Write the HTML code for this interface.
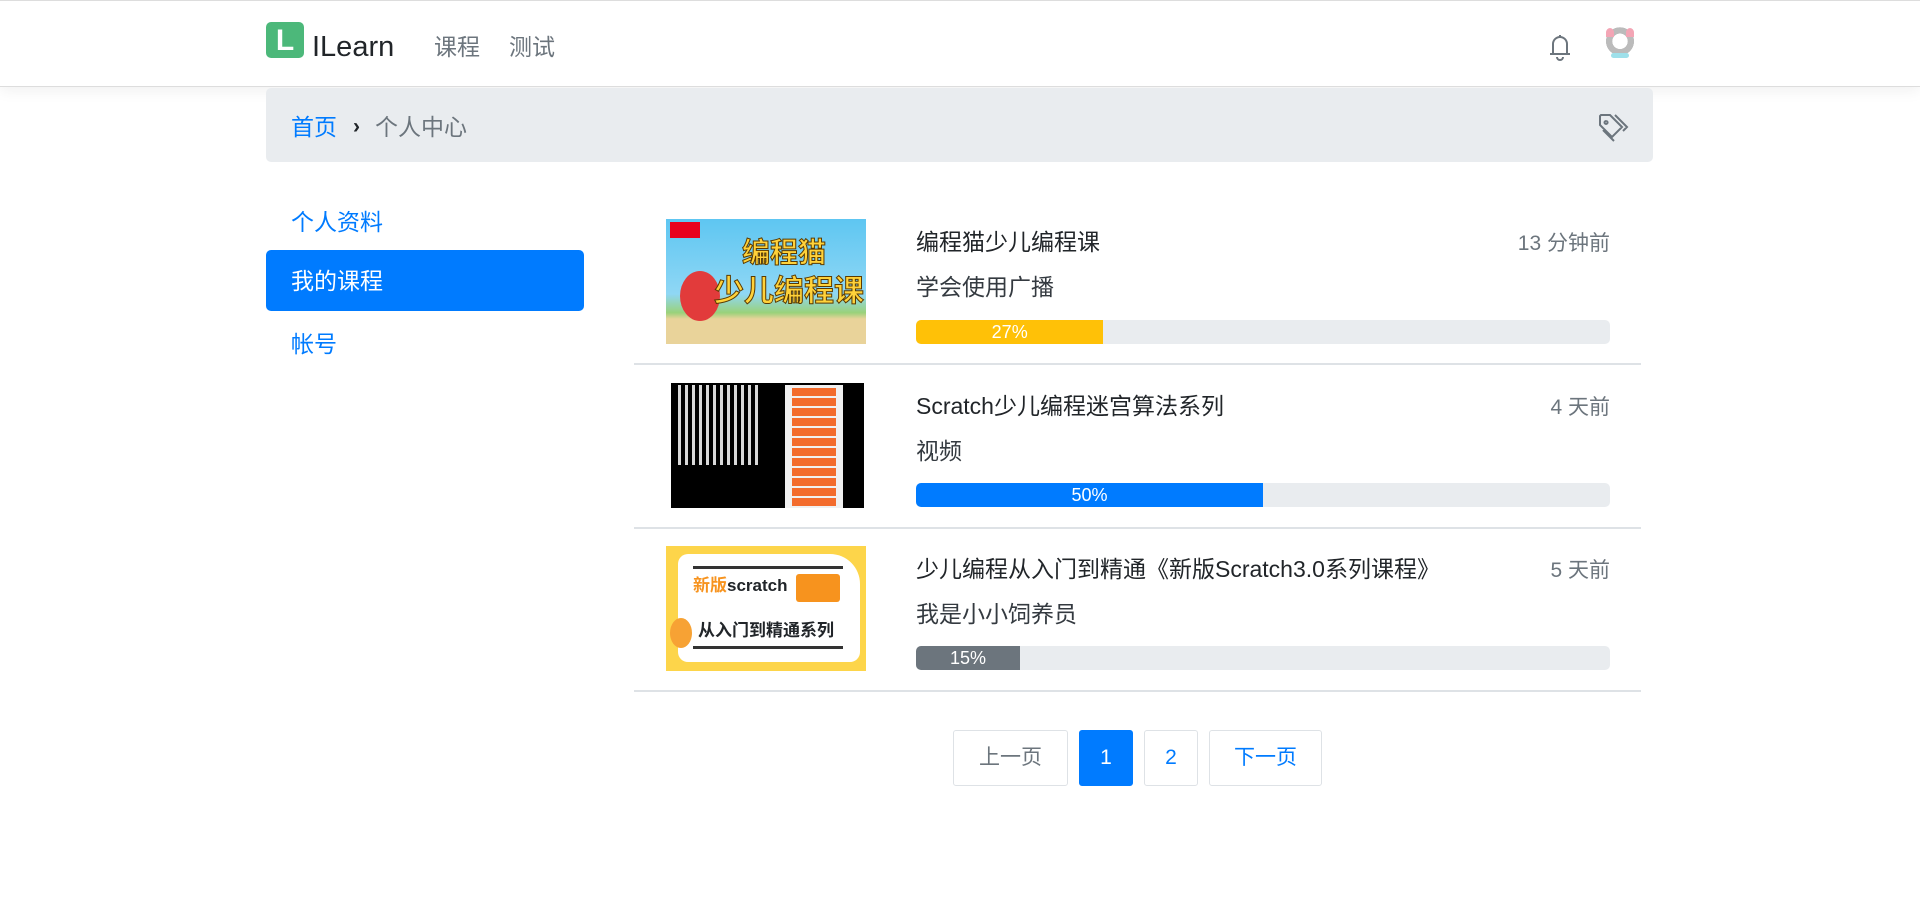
<!DOCTYPE html>
<html><head><meta charset="utf-8"><style>
*{margin:0;padding:0;box-sizing:border-box}
body{width:1920px;height:901px;background:#fff;font-family:"Liberation Sans","Noto Sans CJK SC",sans-serif;color:#212529;position:relative;overflow:hidden;font-size:19.6px}
.a{position:absolute}
.nav{left:0;top:0;width:1920px;height:87px;border-top:1px solid #ddd;border-bottom:1px solid #ddd;box-shadow:0 4px 14px rgba(0,0,0,.06);background:#fff}
.t{white-space:nowrap;line-height:1}
.r{text-align:right}
.bar{height:24px;background:#e9ecef;border-radius:5px;overflow:hidden;left:916px;width:694px}
.bar div{height:100%;color:#fff;font-size:18px;text-align:center;line-height:24px}
.hr{left:634px;width:1007px;height:2px;background:#dee2e6}
.pg{top:730px;height:56px;border:1px solid #dee2e6;border-radius:3px;color:#007bff;text-align:center;line-height:54px;font-size:21px}
</style></head><body>
<div class="a nav"></div>
<div class="a" style="left:266px;top:22px;width:38px;height:36px;background:#4cb87a;border-radius:5px;color:#fff;font-size:30px;font-weight:bold;text-align:center;line-height:38px">L</div>
<div class="a t" style="left:312px;top:33px;font-size:29px;color:#212529">ILearn</div>
<div class="a t" style="left:434px;top:36px;color:#6c757d;font-size:23px">课程</div>
<div class="a t" style="left:509px;top:36px;color:#6c757d;font-size:23px">测试</div>
<svg class="a" style="left:1546px;top:31px" width="28" height="30" viewBox="0 0 28 30" fill="none" stroke="#6c757d" stroke-width="2"><path d="M4 23h20M7 23v-10a7 7 0 0 1 14 0v10M14 4v2M11 26a3 3 0 0 0 6 0"/></svg>
<div class="a" style="left:1603px;top:26px;width:34px;height:34px;border-radius:40%;background:radial-gradient(circle at 50% 45%,#fff 0 30%,#bbb 31% 55%,transparent 56%)"></div>
<div class="a" style="left:1606px;top:28px;width:8px;height:9px;background:#f3a5b5;border-radius:50% 50% 0 0"></div>
<div class="a" style="left:1626px;top:28px;width:8px;height:9px;background:#f3a5b5;border-radius:50% 50% 0 0"></div>
<div class="a" style="left:1611px;top:53px;width:18px;height:5px;background:#9ee0ea;border-radius:3px"></div>

<div class="a" style="left:266px;top:88px;width:1387px;height:74px;background:#e9ecef;border-radius:5px"></div>
<div class="a t" style="left:291px;top:116px;font-size:23px;color:#007bff">首页</div>
<div class="a t" style="left:353px;top:116px;font-size:21px;color:#212529;font-weight:bold">›</div>
<div class="a t" style="left:375px;top:116px;font-size:23px;color:#6c757d">个人中心</div>
<svg class="a" style="left:1597px;top:111px" width="32" height="32" viewBox="0 0 32 32" fill="none" stroke="#6c757d" stroke-width="2"><path d="M3 5v9l12 12 10-10L13 4H4zM9 10a1.5 1.5 0 1 0 0.1 0M6 19l11 11M18 4l12 12-4 4"/></svg>

<div class="a t" style="left:291px;top:211px;font-size:23px;color:#007bff">个人资料</div>
<div class="a" style="left:266px;top:250px;width:318px;height:61px;background:#007bff;border-radius:5px"></div>
<div class="a t" style="left:291px;top:270px;font-size:23px;color:#fff">我的课程</div>
<div class="a t" style="left:291px;top:333px;font-size:23px;color:#007bff">帐号</div>

<!-- item1 -->
<div class="a" style="left:666px;top:219px;width:200px;height:125px;background:linear-gradient(#5ec6f2 0,#8fd7f4 60%,#9ad27a 75%,#e9d39a 80%,#e9d39a 100%);overflow:hidden">
<div class="a" style="left:4px;top:3px;width:30px;height:16px;background:#e8001c"></div>
<div class="a" style="left:14px;top:52px;width:40px;height:50px;background:#e23b3b;border-radius:50%"></div>
<div class="a t" style="left:76px;top:20px;font-size:28px;font-weight:bold;color:#ffd23a;-webkit-text-stroke:1px #5a3a00">编程猫</div>
<div class="a t" style="left:48px;top:58px;font-size:30px;font-weight:bold;color:#ffd23a;-webkit-text-stroke:1px #5a3a00">少儿编程课</div>
</div>
<div class="a t" style="left:916px;top:231px;font-size:23px">编程猫少儿编程课</div>
<div class="a t r" style="right:310px;top:233px;font-size:21px;color:#6c757d">13 分钟前</div>
<div class="a t" style="left:916px;top:276px;font-size:23px;color:#343a40">学会使用广播</div>
<div class="a bar" style="top:320px"><div style="width:27%;background:#ffc107">27%</div></div>
<div class="a hr" style="top:363px"></div>
<!-- item2 -->
<div class="a" style="left:671px;top:383px;width:193px;height:125px;background:#000"></div>
<div class="a" style="left:678px;top:385px;width:82px;height:80px;background:repeating-linear-gradient(90deg,#fff 0 3px,#000 3px 7px),#fff;opacity:.85"></div>
<div class="a" style="left:785px;top:385px;width:58px;height:123px;background:#f0f0f0"></div>
<div class="a" style="left:792px;top:388px;width:44px;height:118px;background:repeating-linear-gradient(#f36b2c 0 8px,#f0f0f0 8px 10px)"></div>
<div class="a t" style="left:916px;top:395px;font-size:23px">Scratch少儿编程迷宫算法系列</div>
<div class="a t r" style="right:310px;top:397px;font-size:21px;color:#6c757d">4 天前</div>
<div class="a t" style="left:916px;top:440px;font-size:23px;color:#343a40">视频</div>
<div class="a bar" style="top:483px"><div style="width:50%;background:#007bff">50%</div></div>
<div class="a hr" style="top:527px"></div>
<!-- item3 -->
<div class="a" style="left:666px;top:546px;width:200px;height:125px;background:#fdd54a"></div>
<div class="a" style="left:678px;top:554px;width:182px;height:108px;background:#fff;border-radius:10px 30px 10px 10px"></div>
<div class="a" style="left:693px;top:566px;width:150px;height:3px;background:#333"></div>
<div class="a t" style="left:693px;top:577px;font-size:17px;font-weight:bold"><span style="color:#f7931e">新版</span>scratch</div>
<div class="a" style="left:796px;top:574px;width:44px;height:28px;background:#f7931e;border-radius:3px"></div>
<div class="a t" style="left:698px;top:622px;font-size:17px;font-weight:bold">从入门到精通系列</div>
<div class="a" style="left:693px;top:646px;width:150px;height:3px;background:#333"></div>
<div class="a" style="left:670px;top:618px;width:22px;height:30px;background:#f7a234;border-radius:50%"></div>
<div class="a t" style="left:916px;top:558px;font-size:23px">少儿编程从入门到精通《新版Scratch3.0系列课程》</div>
<div class="a t r" style="right:310px;top:560px;font-size:21px;color:#6c757d">5 天前</div>
<div class="a t" style="left:916px;top:603px;font-size:23px;color:#343a40">我是小小饲养员</div>
<div class="a bar" style="top:646px"><div style="width:15%;background:#6c757d">15%</div></div>
<div class="a hr" style="top:690px"></div>

<div class="a pg" style="left:953px;width:115px;color:#6c757d">上一页</div>
<div class="a pg" style="left:1079px;width:54px;background:#007bff;border-color:#007bff;color:#fff">1</div>
<div class="a pg" style="left:1144px;width:54px">2</div>
<div class="a pg" style="left:1209px;width:113px">下一页</div>
</body></html>
